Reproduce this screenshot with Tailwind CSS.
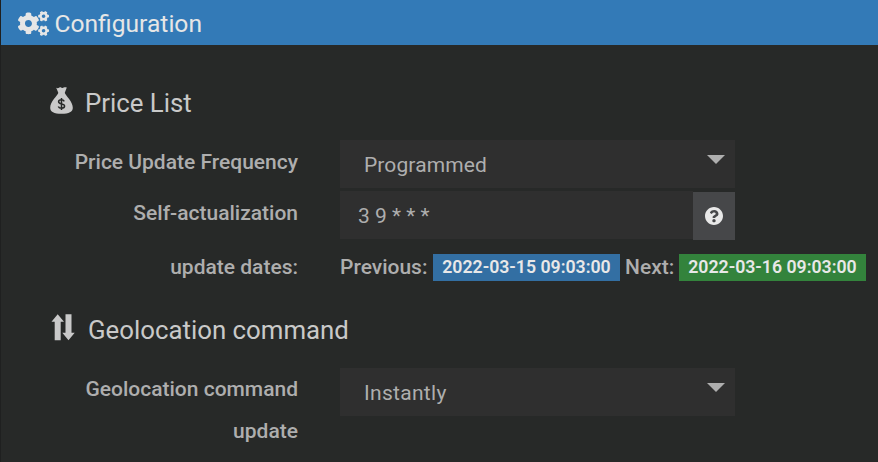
<!DOCTYPE html>
<html lang="en">
<head>
<meta charset="utf-8">
<title>Configuration</title>
<script src="https://cdn.jsdelivr.net/npm/@tailwindcss/browser@4"></script>
</head>
<body class="h-[462px] w-[878px] overflow-hidden bg-[#272928] font-['Roboto',sans-serif] text-[21px] text-[#aeaeae]">
<div class="flex h-full flex-col border-l border-[#1f2020]">
  <header class="flex h-[45px] shrink-0 items-center bg-[#337ab7] pt-[2px] pl-[17px] text-[#e6e6e6]">
    <svg class="h-[25px] w-[31px]" viewBox="0 0 640 512" fill="currentColor">
      <path id="gear" d="M512.1 191l-8.2 14.3c-3 5.3-9.4 7.5-15.1 5.4-11.8-4.4-22.6-10.7-32.1-18.6-4.6-3.8-5.8-10.5-2.8-15.7l8.2-14.3c-6.900-8-12.300-17.300-15.900-27.400h-16.500c-6 0-11.200-4.300-12.200-10.300-2-12-2.100-24.600 0-37.100 1-6 6.200-10.400 12.200-10.400h16.500c3.600-10.100 9-19.400 15.900-27.400l-8.200-14.300c-3-5.200-1.900-11.900 2.800-15.700 9.500-7.900 20.400-14.200 32.100-18.600 5.700-2.100 12.100.1 15.100 5.400l8.200 14.300c10.500-1.900 21.200-1.900 31.700 0L552 6.300c3-5.300 9.400-7.500 15.100-5.400 11.800 4.400 22.600 10.700 32.100 18.600 4.600 3.800 5.800 10.500 2.800 15.700l-8.200 14.300c6.900 8 12.300 17.300 15.900 27.400h16.500c6 0 11.200 4.300 12.200 10.300 2 12 2.100 24.600 0 37.100-1 6-6.200 10.400-12.200 10.400h-16.500c-3.600 10.100-9 19.400-15.900 27.400l8.200 14.300c3 5.200 1.900 11.900-2.800 15.700-9.500 7.900-20.400 14.200-32.100 18.600-5.700 2.100-12.100-.1-15.100-5.400l-8.200-14.300c-10.400 1.900-21.200 1.900-31.700 0zm-10.500-58.800c38.500 29.600 82.400-14.300 52.800-52.800-38.500-29.700-82.400 14.300-52.800 52.800z"/>
      <use href="#gear" y="299"/>
      <path d="M386.3 286.1l33.7 16.8c10.1 5.8 14.5 18.1 10.5 29.1-8.9 24.2-26.4 46.4-42.6 65.8-7.4 8.9-20.2 11.1-30.3 5.3l-29.1-16.8c-16 13.7-34.6 24.6-54.9 31.7v33.6c0 11.6-8.3 21.6-19.7 23.6-24.6 4.2-50.4 4.4-75.9 0-11.5-2-20-11.9-20-23.6V418c-20.3-7.2-38.9-18-54.9-31.7L74 403c-10 5.8-22.9 3.6-30.3-5.3-16.2-19.4-33.3-41.6-42.2-65.7-4-10.9.4-23.2 10.5-29.1l33.3-16.8c-3.9-20.9-3.9-42.4 0-63.4L12 205.8c-10.1-5.8-14.6-18.1-10.5-29 8.9-24.2 26-46.4 42.2-65.8 7.4-8.9 20.2-11.1 30.3-5.3l29.1 16.8c16-13.7 34.6-24.6 54.9-31.7V57.1c0-11.5 8.2-21.5 19.6-23.5 24.6-4.2 50.5-4.4 76-.1 11.5 2 20 11.9 20 23.6v33.6c20.3 7.2 38.9 18 54.9 31.7l29.1-16.8c10-5.8 22.9-3.6 30.3 5.3 16.2 19.4 33.2 41.6 42.1 65.8 4 10.9.1 23.2-10 29.1l-33.7 16.8c3.9 21 3.9 42.5 0 63.5zm-117.6 21.1c59.2-77-28.7-164.9-105.7-105.7-59.2 77 28.7 164.9 105.700 105.700z"/>
    </svg>
    <h1 class="ml-[5.500px] text-[24.600px] leading-[30px] whitespace-nowrap">Configuration</h1>
  </header>

  <main class="flex flex-col">
    <h2 class="mt-[40px] flex h-[36px] items-center pl-[49px] text-[25.800px] leading-9 text-[#c9c9c9]">
      <svg class="mb-[5px] h-[27px] w-[23px]" viewBox="0 0 23 27" fill="currentColor">
        <path d="M6.200.8c1.400.8 2.200.3 3.200-.2.8-.4 1.300-.3 2.100.1s1.400.3 2.200-.1c1-.5 1.900-.3 3.100-.1L14.700 6H8.400z"/>
        <path d="M8.400 5.700h6.300c1 3.300 8.100 8.600 8.100 15 0 4.200-3.800 6.100-11.300 6.100S.2 24.900.2 20.700c0-6.400 7.200-11.700 8.200-15z"/>
        <path fill="none" stroke="#272928" stroke-width="1.500" d="M14.300 14.300C13.600 13.100 12.700 12.700 11.500 12.700c-1.700 0-2.900.8-2.900 2.100 0 3 6 1.200 6 4.300 0 1.400-1.300 2.200-3.100 2.200-1.500 0-2.700-.6-3.200-1.900M11.500 11v12"/>
      </svg>
      <span class="ml-[12px]">Price List</span>
    </h2>

    <div class="mt-[19px] flex h-[48px]">
      <label class="h-[44px] w-[297px] text-right font-medium leading-[45px]">Price Update Frequency</label>
      <div class="ml-[42px] flex w-[395px] justify-between bg-[#2f2f2f] pr-[10px] pl-[24px] leading-[51px]">
        <span class="tracking-[0.1px]">Programmed</span>
        <svg class="mt-[15px] h-[9px] w-[18px]" viewBox="0 0 18 9" fill="#aeaeae"><path d="M0 0h18L9 9z"/></svg>
      </div>
    </div>

    <div class="mt-[3px] flex h-[49px]">
      <label class="w-[297px] text-right font-medium leading-[45px]">Self-actualization</label>
      <div class="ml-[42px] h-[48px] w-[353px] bg-[#2f2f2f] pl-[18px] leading-[51px]">3 9 * * *</div>
      <div class="mt-px flex h-[48px] w-[42px] items-center justify-center bg-[#464749]">
        <svg class="h-[18px] w-[18px]" viewBox="8 8 496 496" fill="#e8e8e8"><path d="M504 256c0 136.997-111.043 248-248 248S8 392.997 8 256C8 119.083 119.043 8 256 8s248 111.083 248 248zM262.655 90c-54.497 0-89.255 22.957-116.549 63.758-3.536 5.286-2.353 12.415 2.715 16.258l34.699 26.310c5.205 3.947 12.621 3.008 16.665-2.122 17.864-22.658 30.113-35.797 57.303-35.797 20.429 0 45.698 13.148 45.698 32.958 0 14.976-12.363 22.667-32.534 33.976C247.128 238.528 216 254.941 216 296v4c0 6.627 5.373 12 12 12h56c6.627 0 12-5.373 12-12v-1.333c0-28.462 83.186-29.647 83.186-106.667 0-58.002-60.165-102-116.531-102zM256 338c-25.365 0-46 20.635-46 46 0 25.364 20.635 46 46 46s46-20.636 46-46c0-25.365-20.635-46-46-46z"/></svg>
      </div>
    </div>

    <div class="mt-[5px] flex h-[44px] items-center font-medium whitespace-nowrap">
      <div class="w-[297px] pt-[2px] text-right">update dates:</div>
      <div class="ml-[42px] w-[93px] pt-[2px]">Previous:</div>
      <div class="mt-px h-[27px] w-[187px] bg-[#336fa3] text-center text-[17.700px] font-semibold leading-[27px] text-[#e8e8e8]">2022-03-15 09:03:00</div>
      <div class="ml-[5px] w-[54px] pt-[2px]">Next:</div>
      <div class="mt-px h-[27px] w-[187px] bg-[#33833c] text-center text-[17.700px] font-semibold leading-[27px] text-[#e8e8e8]">2022-03-16 09:03:00</div>
    </div>

    <h2 class="mt-[23px] flex h-[36px] items-center pl-[50px] text-[25.800px] leading-9 text-[#c9c9c9]">
      <svg class="mb-[5px] h-[27px] w-[24px]" viewBox="0 0 24 27" fill="currentColor">
        <path d="M6.700.3l6.300 7.500H9.700v18.500h-6V7.800H.500zM14.500.3h6v18.500h3.200l-6.200 7.500-6.200-7.500h3.200z"/>
      </svg>
      <span class="ml-[13px]">Geolocation command</span>
    </h2>

    <div class="mt-[20px] flex h-[84px]">
      <label class="w-[297px] pl-[60px] text-right font-medium leading-[42px]">Geolocation command update</label>
      <div class="ml-[42px] flex h-[48px] w-[395px] justify-between bg-[#2f2f2f] pr-[10px] pl-[24px] leading-[51px]">
        <span class="tracking-[0.3px]">Instantly</span>
        <svg class="mt-[15px] h-[9px] w-[18px]" viewBox="0 0 18 9" fill="#aeaeae"><path d="M0 0h18L9 9z"/></svg>
      </div>
    </div>
  </main>
</div>
</body>
</html>
